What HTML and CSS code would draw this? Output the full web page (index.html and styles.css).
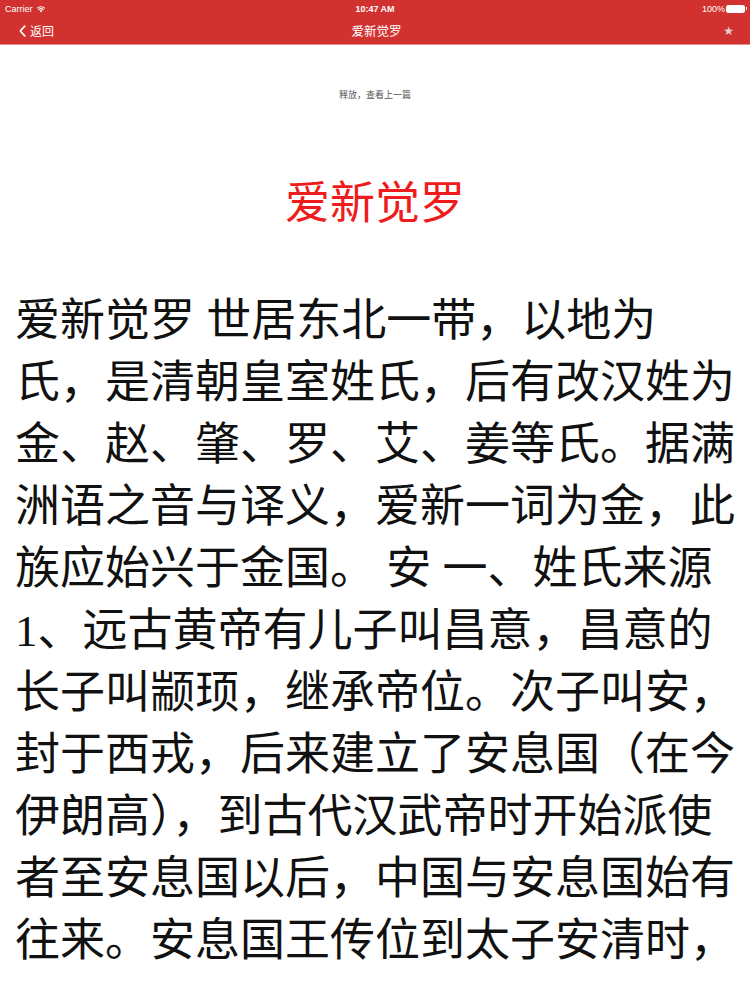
FILE: index.html
```html
<!DOCTYPE html>
<html lang="zh-CN">
<head>
<meta charset="utf-8">
<title>爱新觉罗</title>
<link rel="stylesheet" href="styles.css">
</head>
<body>
<header class="topbar">
  <div class="status">
    <div class="status-left">
      <span>Carrier</span>
      <svg class="wifi" viewBox="0 0 12 9" width="10" height="8"><path d="M6 8.5 L4.2 6.6 A2.6 2.6 0 0 1 7.8 6.6 Z" fill="#fff"/><path d="M2.6 5 A4.9 4.9 0 0 1 9.4 5 L8.5 5.9 A3.6 3.6 0 0 0 3.5 5.9 Z" fill="#fff"/><path d="M0.9 3.3 A7.3 7.3 0 0 1 11.1 3.3 L10.2 4.2 A6 6 0 0 0 1.8 4.2 Z" fill="#fff"/></svg>
    </div>
    <div class="status-time">10:47 AM</div>
    <div class="status-right">
      <span>100%</span>
      <span class="battery"><span class="battery-fill"></span></span>
    </div>
  </div>
  <nav class="navbar">
    <a class="back">
      <svg viewBox="0 0 8 13" width="7" height="12"><path d="M6.5 1 L1.5 6.5 L6.5 12" fill="none" stroke="#fff" stroke-width="2" stroke-linecap="round" stroke-linejoin="round"/></svg>
      <span>返回</span>
    </a>
    <div class="nav-title">爱新觉罗</div>
    <div class="nav-star">★</div>
  </nav>
</header>
<main class="content">
  <p class="pull-hint">释放，查看上一篇</p>
  <h1 class="article-title">爱新觉罗</h1>
  <p class="article-body">爱新觉罗 世居东北一带，以地为氏，是清朝皇室姓氏，后有改汉姓为金、赵、肇、罗、艾、姜等氏。据满洲语之音与译义，爱新一词为金，此族应始兴于金国。 安 一、姓氏来源1、远古黄帝有儿子叫昌意，昌意的长子叫颛顼，继承帝位。次子叫安，封于西戎，后来建立了安息国（在今伊朗高），到古代汉武帝时开始派使者至安息国以后，中国与安息国始有往来。安息国王传位到太子安清时，</p>
</main>
</body>
</html>
```

FILE: styles.css
```css
html, body {
  margin: 0;
  padding: 0;
  background: #fff;
}
body {
  width: 750px;
  overflow: hidden;
  font-family: "Liberation Sans", "Noto Sans CJK SC", sans-serif;
}
.topbar {
  background: #d2322f;
  color: #fff;
  border-bottom: 1px solid #e98f8d;
}
.status {
  height: 17px;
  display: flex;
  align-items: center;
  justify-content: space-between;
  padding: 0 5px;
  font-size: 9px;
}
.status-left {
  display: flex;
  align-items: center;
  gap: 3px;
  width: 120px;
}
.status-time {
  font-weight: bold;
  font-size: 9px;
}
.status-right {
  width: 120px;
  display: flex;
  justify-content: flex-end;
  align-items: center;
  gap: 1px;
}
.battery {
  width: 17px;
  height: 6px;
  border: 1px solid #fff;
  border-radius: 1.5px;
  display: flex;
  position: relative;
}
.battery::after {
  content: "";
  position: absolute;
  right: -3px;
  top: 1.5px;
  width: 1.5px;
  height: 3px;
  background: #fff;
}
.battery-fill {
  flex: 1;
  background: #fff;
}
.navbar {
  height: 27px;
  display: flex;
  align-items: center;
  justify-content: space-between;
  padding: 0 16px 0 19px;
}
.back {
  display: flex;
  align-items: center;
  gap: 4px;
  font-size: 12px;
  width: 100px;
  font-family: "Noto Sans CJK SC", sans-serif;
}
.nav-title {
  font-size: 12.5px;
  font-family: "Noto Sans CJK SC", sans-serif;
}
.nav-star {
  width: 100px;
  text-align: right;
  font-size: 12px;
  color: #e3d3d3;
  font-family: "DejaVu Sans", sans-serif;
}
.content {
  padding: 0 15px;
}
.pull-hint {
  margin: 43px 0 0;
  text-align: center;
  font-size: 9px;
  color: #555;
  font-family: "Noto Sans CJK SC", sans-serif;
  line-height: 14px;
}
.article-title {
  margin: 70px 0 0;
  text-align: center;
  font-weight: normal;
  font-size: 45px;
  line-height: 56px;
  color: #ee1c1c;
  font-family: "Noto Sans CJK SC", sans-serif;
}
.article-body {
  margin: 62px 0 0;
  font-size: 45px;
  line-height: 62px;
  color: #111;
  font-family: "Liberation Serif", "Noto Sans CJK SC", serif;
}
```
